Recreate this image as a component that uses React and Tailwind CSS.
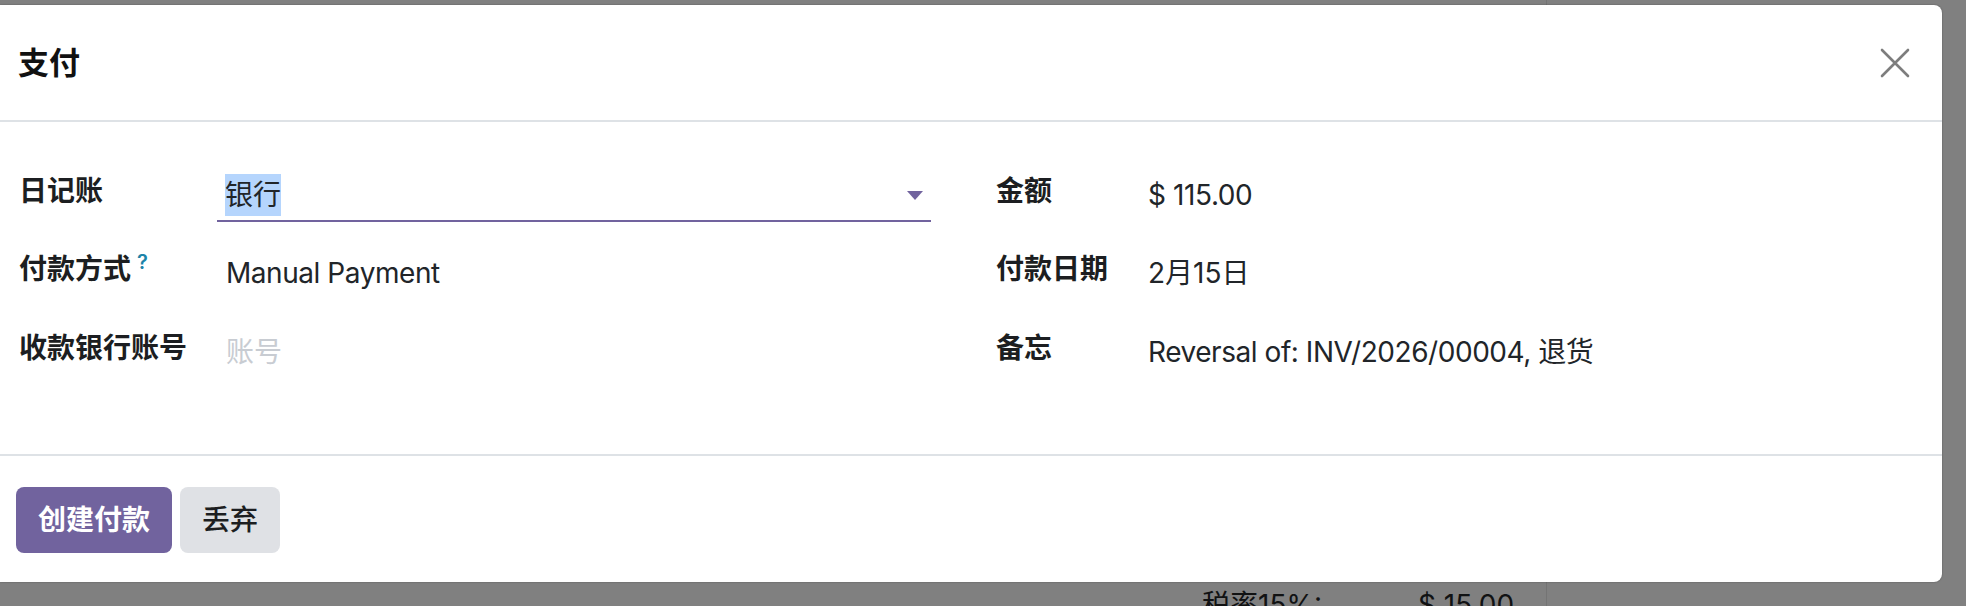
import React from "react";

const font = "font-['Inter','Noto_Sans_CJK_SC',sans-serif]";

function CloseIcon() {
  return (
    <svg width="30" height="30" viewBox="0 0 30 30" fill="none">
      <path d="M2 2 L28 28 M28 2 L2 28" stroke="#7d7d7d" strokeWidth="2.6" strokeLinecap="round" />
    </svg>
  );
}

function Caret() {
  return (
    <svg width="16" height="9" viewBox="0 0 16 9">
      <path d="M0 0 H16 L8 9 Z" fill="#71639e" />
    </svg>
  );
}

function App() {
  return (
    <div className={`w-[1966px] h-[606px] overflow-hidden relative bg-[#808080] ${font}`}>
      {/* page behind the dialog */}
      <div className="flex h-full">
        <div className="w-[1547px] h-full border-r border-[#747474] pt-[584px]">
          <div className="flex pl-[1202px] text-[28px] leading-[42px] text-[#111213]">
            <span className="w-[216px]">税率15%:</span>
            <span>$ 15.00</span>
          </div>
        </div>
        <div className="flex-1" />
      </div>

      {/* dialog */}
      <div className="absolute left-0 top-[5px] w-[1942px] h-[577px] bg-white rounded-r-[8px] shadow-[0_0_2px_rgba(0,0,0,0.35)] flex flex-col">
        {/* header */}
        <div className="h-[117px] border-b-2 border-[#dee2e6] flex items-center justify-between pl-[18px] pr-[32px]">
          <h4 className="text-[31px] font-semibold text-[#111] leading-none">支付</h4>
          <button className="w-[30px] h-[30px] flex items-center justify-center mt-[1px]">
            <CloseIcon />
          </button>
        </div>

        {/* body */}
        <div className="h-[332px] pt-[48px] pl-[19px] flex text-[28px] text-[#212529]">
          <div className="w-[977px] flex flex-col">
            <div className="h-[78px] flex items-start">
              <div className="w-[198px] leading-[42px] font-semibold text-[#1c1e21]">日记账</div>
              <div className="w-[714px] pt-[4px] pb-[4px] pl-[8px] pr-[8px] border-b-2 border-[#71639e] flex items-center justify-between">
                <span className="inline-block leading-[42px] bg-[#b5d5fd]">银行</span>
                <Caret />
              </div>
            </div>
            <div className="h-[79px] flex items-start">
              <div className="w-[198px] leading-[42px] font-semibold text-[#1c1e21] flex items-start">
                付款方式
                <sup className="text-[20px] text-[#1d84a9] font-semibold ml-[6px] leading-none mt-[14px]">?</sup>
              </div>
              <div className="pt-[4px] pl-[9px] leading-[42px] tracking-[-0.45px]">Manual Payment</div>
            </div>
            <div className="h-[78px] flex items-start">
              <div className="w-[198px] leading-[42px] font-semibold text-[#1c1e21]">收款银行账号</div>
              <div className="pt-[4px] pl-[9px] leading-[42px] text-[#c8ccd2]">账号</div>
            </div>
          </div>

          <div className="flex-1 flex flex-col">
            <div className="h-[78px] flex items-start">
              <div className="w-[152px] leading-[42px] font-semibold text-[#1c1e21]">金额</div>
              <div className="pt-[4px] leading-[42px] tracking-[-0.4px]">$ 115.00</div>
            </div>
            <div className="h-[79px] flex items-start">
              <div className="w-[152px] leading-[42px] font-semibold text-[#1c1e21]">付款日期</div>
              <div className="pt-[4px] leading-[42px]">2月15日</div>
            </div>
            <div className="h-[78px] flex items-start">
              <div className="w-[152px] leading-[42px] font-semibold text-[#1c1e21]">备忘</div>
              <div className="pt-[4px] leading-[42px] tracking-[-0.45px]">Reversal of: INV/2026/00004, 退货</div>
            </div>
          </div>
        </div>

        {/* footer */}
        <div className="flex-1 border-t-2 border-[#dee2e6] pl-[16px] pt-[31px] flex items-start gap-[8px]">
          <button className="h-[66px] px-[22px] rounded-[8px] bg-[#71639e] text-white text-[28px] font-semibold">
            创建付款
          </button>
          <button className="h-[66px] px-[22px] rounded-[8px] bg-[#dfe1e5] text-[#1c1e21] text-[28px] font-medium">
            丢弃
          </button>
        </div>
      </div>
    </div>
  );
}

export default App;
